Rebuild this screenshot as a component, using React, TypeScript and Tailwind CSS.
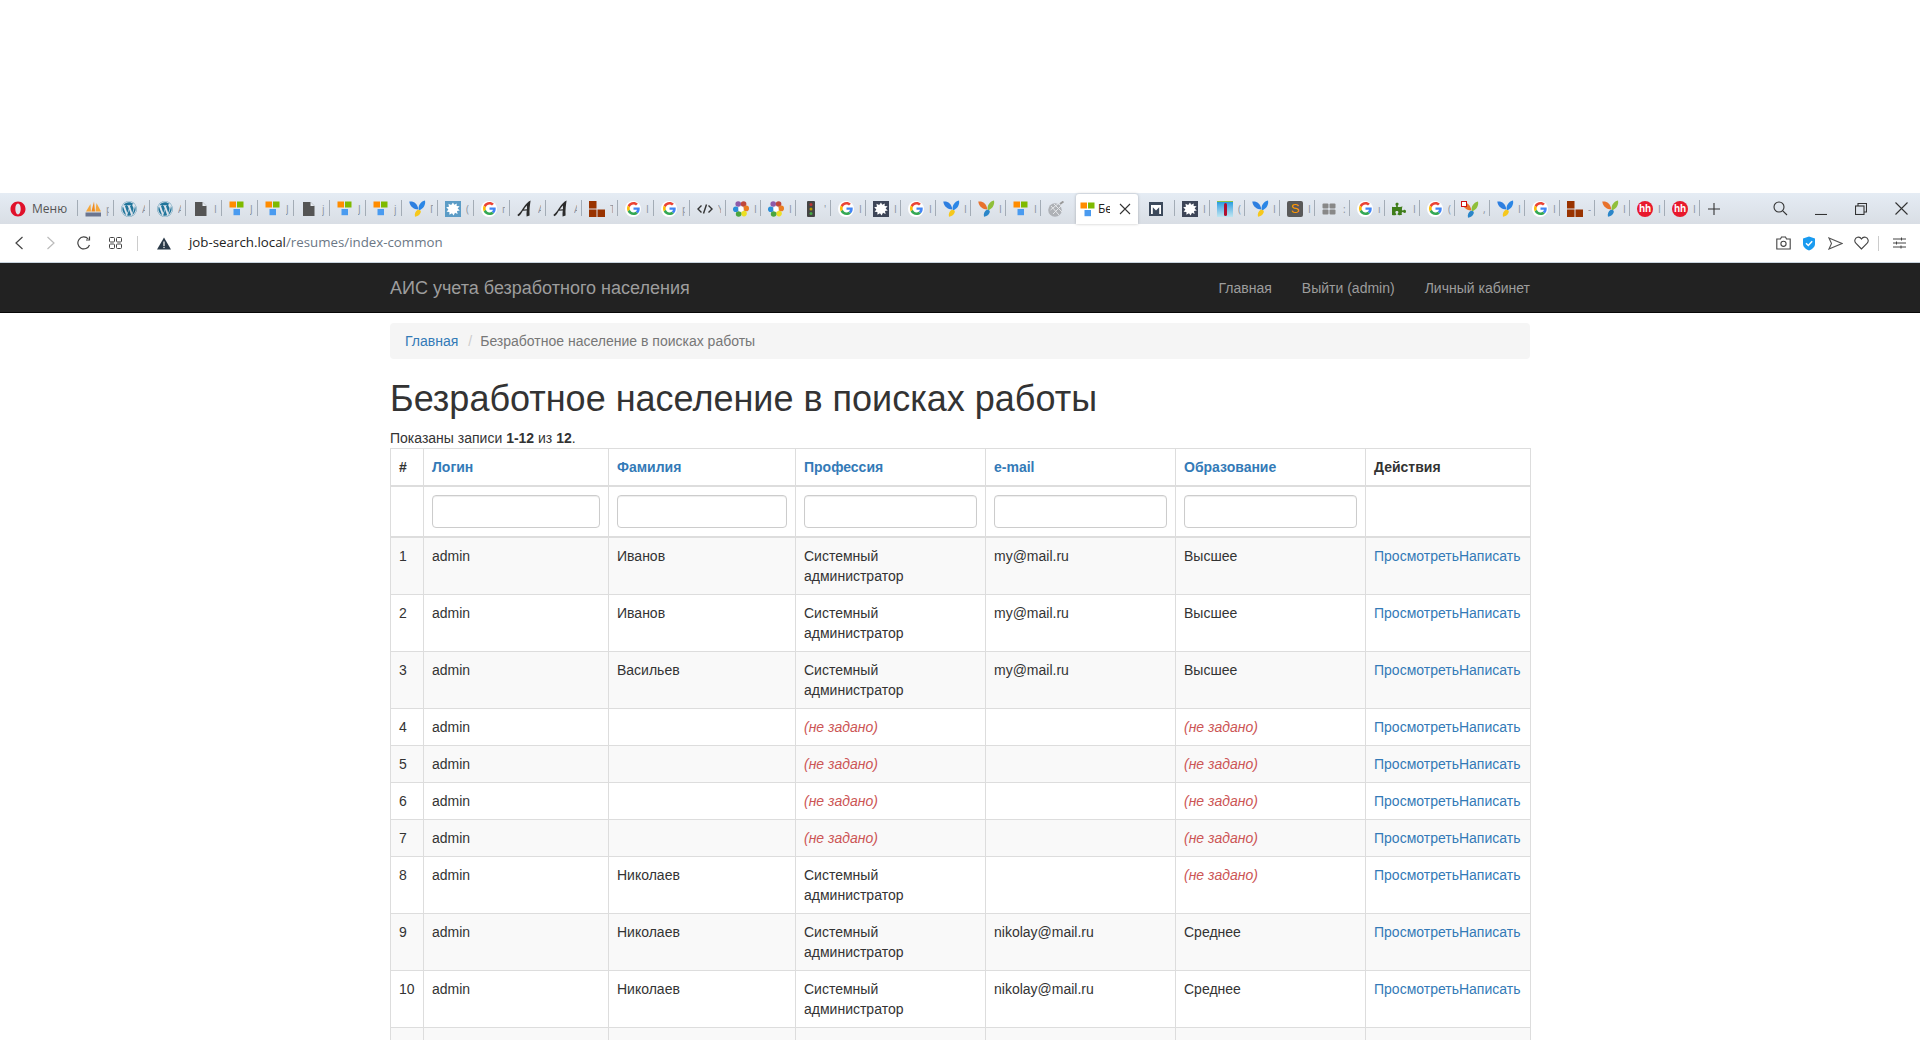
import React from "react";
import { FaWordpress, FaPuzzlePiece } from "react-icons/fa";

type IconName = "pma" | "wp" | "doc" | "ms" | "yii" | "splat" | "g" | "a" | "brick" | "code" | "flower" | "traffic" | "dark" | "yo" | "sat" | "m" | "tricky" | "s" | "grid" | "puzzle" | "yred" | "hh";

function Ms() {
  return (
    <svg width="15" height="15" viewBox="0 0 15 15" className="block">
      <rect x="0.5" y="0.5" width="6.5" height="6" fill="#ff8c00" />
      <rect x="8" y="0.5" width="6.5" height="6" fill="#7fba00" />
      <rect x="4.5" y="8" width="6.5" height="6.2" fill="#4a9bf0" />
    </svg>
  );
}

function Yii({ orange }: { orange?: boolean }) {
  return (
    <svg width="17" height="17" viewBox="0 0 17 17" className="block">
      <path d="M0.3 1.6C4.5 1 8.6 3.2 9.3 9.6C4.6 9.6 0.8 6.4 0.3 1.6Z" fill={orange ? "#e8722c" : "#2e7fe0"} />
      <path d="M16 0.4C16.9 4.4 14.4 9 9.9 10.2C8.6 6 11.4 1.4 16 0.4Z" fill={orange ? "#8fbf3a" : "#2b86e6"} />
      <path d="M8.8 9.8C11 9.6 12.4 10.6 11.6 12.8C10.8 15 8.4 16.4 6 16.8C5.2 14.2 6.4 11.2 8.8 9.8Z" fill={orange ? "#2a86c9" : "#f6c81c"} />
    </svg>
  );
}

function Splat({ dark }: { dark?: boolean }) {
  return (
    <svg width="16" height="16" viewBox="0 0 16 16" className="block">
      <rect width="16" height="16" fill={dark ? "#3d4557" : "#5b9cc6"} />
      <path d="M8 1.5L9.2 3.8L11.8 2.4L11.6 5L14.6 5.2L12.6 7.4L14.8 9.6L12 10L12.6 13L10 11.8L8.6 14.6L7 12.2L4.4 13.8L4.4 11L1.6 10.8L3.4 8.4L1.2 6.2L4 5.8L3.4 2.8L6.2 4Z" fill="#fff" />
    </svg>
  );
}

function G() {
  return (
    <div className="w-4 h-4 rounded-full bg-white flex items-center justify-center">
      <svg width="13" height="13" viewBox="0 0 48 48" className="block">
        <path fill="#EA4335" d="M24 9.5c3.54 0 6.71 1.22 9.21 3.6l6.85-6.85C35.9 2.38 30.47 0 24 0 14.62 0 6.51 5.38 2.56 13.22l7.98 6.19C12.43 13.72 17.74 9.5 24 9.5z" />
        <path fill="#4285F4" d="M46.98 24.55c0-1.57-.15-3.09-.38-4.55H24v9.02h12.94c-.58 2.96-2.26 5.48-4.78 7.18l7.73 6c4.51-4.18 7.09-10.36 7.09-17.65z" />
        <path fill="#FBBC05" d="M10.53 28.59c-.48-1.45-.76-2.99-.76-4.59s.27-3.14.76-4.59l-7.98-6.19C.92 16.46 0 20.12 0 24c0 3.88.92 7.54 2.56 10.78l7.97-6.19z" />
        <path fill="#34A853" d="M24 48c6.48 0 11.93-2.13 15.89-5.81l-7.73-6c-2.15 1.45-4.92 2.3-8.16 2.3-6.26 0-11.57-4.22-13.47-9.91l-7.98 6.19C6.51 42.62 14.62 48 24 48z" />
      </svg>
    </div>
  );
}

function Icon({ name }: { name: IconName }) {
  switch (name) {
    case "pma":
      return (
        <svg width="17" height="16" viewBox="0 0 17 16" className="block">
          <path d="M1 10.5L5.5 3L6 10.5Z" fill="#f5a63a" />
          <path d="M6.4 10.5L9 0.5L10 10.5Z" fill="#f08a1d" />
          <path d="M10.5 10.5L11.5 2L16 10.5Z" fill="#f5a63a" />
          <path d="M0.5 11.5H16V15.5H0.5Z" fill="#6a7590" />
        </svg>
      );
    case "wp":
      return <FaWordpress className="block text-[#21759b] text-[16px]" />;
    case "doc":
      return (
        <svg width="16" height="16" viewBox="0 0 16 16" className="block">
          <path d="M2 1H9.5L13.5 5V15H2Z" fill="#555" />
          <path d="M9.5 1V5H13.5Z" fill="#e8edf3" />
        </svg>
      );
    case "ms":
      return <Ms />;
    case "yii":
      return <Yii />;
    case "yo":
      return <Yii orange />;
    case "splat":
      return <Splat />;
    case "dark":
      return <Splat dark />;
    case "g":
      return <G />;
    case "a":
      return (
        <svg width="17" height="17" viewBox="0 0 17 17" className="block">
          <path d="M0.3 15C3.5 12.5 5 9.5 7.5 6C9 4 11 1.8 13.6 0.6C13 4.5 12.2 9.5 12.6 15.6L9.6 16.4C9.4 14 9.6 12 9.8 10.6L5.8 10.8C4.8 12.8 3.2 15.4 1.6 16.2Z" fill="#2b2b2b" />
          <path d="M9.9 5.6C8.8 6.8 7.6 8.2 6.8 9.4L10 9.2Z" fill="#e3e8ee" />
        </svg>
      );
    case "brick":
      return (
        <svg width="16" height="16" viewBox="0 0 16 16" className="block">
          <rect x="0" y="0" width="7.5" height="7.5" fill="#993300" />
          <rect x="0" y="8.5" width="7.5" height="7.5" fill="#993300" />
          <rect x="8.5" y="8.5" width="7.5" height="7.5" fill="#993300" />
        </svg>
      );
    case "code":
      return (
        <svg width="16" height="16" viewBox="0 0 16 16" className="block" fill="none" stroke="#333" strokeWidth="1.4">
          <path d="M4.5 4.5L1 8L4.5 11.5" />
          <path d="M11.5 4.5L15 8L11.5 11.5" />
          <path d="M9.5 3.5L6.5 12.5" />
        </svg>
      );
    case "flower":
      return (
        <svg width="16" height="16" viewBox="0 0 16 16" className="block">
          <circle cx="5.2" cy="3" r="2.8" fill="#8e5aa8" />
          <circle cx="10.6" cy="3" r="2.8" fill="#c0473b" />
          <circle cx="13.2" cy="7.4" r="2.8" fill="#ea7d22" />
          <circle cx="11" cy="12.6" r="2.8" fill="#ece024" />
          <circle cx="5.6" cy="13" r="2.8" fill="#4aa63f" />
          <circle cx="2.8" cy="8.2" r="2.8" fill="#2a8fd8" />
          <circle cx="8" cy="8" r="2.6" fill="#fff" />
        </svg>
      );
    case "traffic":
      return (
        <svg width="16" height="16" viewBox="0 0 16 16" className="block">
          <rect x="4" y="0" width="8" height="16" rx="1" fill="#444" />
          <circle cx="8" cy="3.5" r="1.5" fill="#b33" />
          <circle cx="8" cy="8" r="1.5" fill="#b90" />
          <circle cx="8" cy="12.5" r="1.5" fill="#4a4" />
        </svg>
      );
    case "sat":
      return (
        <svg width="16" height="16" viewBox="0 0 16 16" className="block">
          <circle cx="7" cy="9" r="6.8" fill="#aeb1b6" />
          <path d="M2.5 9L11 2M5 13L14 4M3 5L11 14M6 3L14 11" stroke="#e5e7ea" strokeWidth="1" />
          <path d="M12 3L15.5 0.5" stroke="#999" strokeWidth="2" />
        </svg>
      );
    case "m":
      return (
        <svg width="14" height="14" viewBox="0 0 14 14" className="block">
          <rect width="14" height="14" fill="#3d4a5c" />
          <path d="M2 3H12V12H10.2V5.2L7 8.5L3.8 5.2V12H2Z" fill="#fff" />
        </svg>
      );
    case "tricky":
      return (
        <div className="w-4 h-4 bg-gradient-to-b from-[#1f9fe0] to-[#bfe6f0] flex items-center justify-center border-t border-[#8bc34a]">
          <span className="w-[3px] h-[13px] bg-[#b01030] rounded-sm" />
        </div>
      );
    case "s":
      return (
        <div className="w-4 h-4 rounded-[2px] bg-[#595959] flex items-center justify-center text-[#ff9800] text-[13px] leading-none font-['Liberation_Sans',sans-serif]">S</div>
      );
    case "grid":
      return (
        <svg width="14" height="14" viewBox="0 0 14 14" className="block">
          <rect x="0.5" y="1.5" width="6" height="5" rx="1" fill="#888" />
          <rect x="7.5" y="1.5" width="6" height="5" rx="1" fill="#888" />
          <rect x="0.5" y="7.5" width="6" height="5" rx="1" fill="#888" />
          <rect x="7.5" y="7.5" width="6" height="5" rx="1" fill="#888" />
        </svg>
      );
    case "puzzle":
      return <FaPuzzlePiece className="block text-[#3f7d1a] text-[14px]" />;
    case "yred":
      return (
        <div className="relative w-4 h-4">
          <Yii orange />
          <span className="absolute left-[-1px] top-0 w-[6px] h-[6px] bg-white border border-[#d01010]" />
        </div>
      );
    case "hh":
      return (
        <div className="w-4 h-4 rounded-full bg-[#e8192c] flex items-center justify-center text-white text-[10px] leading-none font-bold font-['Liberation_Sans',sans-serif]">hh</div>
      );
  }
}

const TABS_A: [IconName, string][] = [
  ["pma", "p"], ["wp", "A"], ["wp", "A"], ["doc", "I"], ["ms", "J"], ["ms", "J"], ["doc", "j"], ["ms", "J"], ["ms", "j"], ["yii", "Г"], ["splat", "("],
  ["g", "г"], ["a", "A"], ["a", "A"], ["brick", "Т"], ["g", "I"], ["g", "р"], ["code", "Y"],
];
const TABS_B: [IconName, string][] = [
  ["flower", "I"], ["flower", "I"], ["traffic", "'"], ["g", "I"], ["dark", "I"], ["g", "I"], ["yii", "I"], ["yo", "I"], ["ms", "I"],
];
const TABS_C: [IconName, string][] = [
  ["dark", "I"], ["tricky", "("], ["yii", "I"], ["s", "I"], ["grid", ":"], ["g", "ı"], ["puzzle", "I"], ["g", "("], ["yred", ","], ["yii", "I"], ["g", "I"], ["brick", "-"], ["yo", "I"], ["hh", "I"], ["hh", "I"],
];

function Tab({ icon, letter, wide, sep = true }: { icon: IconName; letter: string; wide?: boolean; sep?: boolean }) {
  return (
    <div className={`relative flex items-center shrink-0 h-full ${wide ? "w-[36px]" : "w-[35px]"}`}>
      <div className="w-[28px] pl-[7px] flex items-center"><Icon name={icon} /></div>
      <span className="absolute left-[28px] top-[9px] w-[3px] overflow-hidden text-[10px] leading-[14px] text-[#8a93a0]">{letter}</span>
      {sep && <span className="absolute right-0 top-[7px] h-4 w-px bg-[#a3acb6]" />}
    </div>
  );
}

function TabBar() {
  return (
    <div className="h-[31px] flex items-stretch bg-gradient-to-b from-[#e5ecf4] to-[#d9dee5] font-['Open_Sans',sans-serif] text-[#444]">
      <div className="relative w-[78px] shrink-0 flex items-center">
        <svg width="16" height="16" viewBox="0 0 16 16" className="ml-[10px] block">
          <path fillRule="evenodd" d="M8 0.5C3.8 0.5 0.5 3.9 0.5 8C0.5 12.1 3.8 15.5 8 15.5C12.2 15.5 15.5 12.1 15.5 8C15.5 3.9 12.2 0.5 8 0.5ZM8 2.6C9.6 2.6 10.7 5 10.7 8C10.7 11 9.6 13.4 8 13.4C6.4 13.4 5.3 11 5.3 8C5.3 5 6.4 2.6 8 2.6Z" fill="#e0112b" />
        </svg>
        <span className="ml-[6px] text-[12px] leading-none text-[#555]">Меню</span>
        <span className="absolute right-0 top-[7px] h-4 w-px bg-[#a3acb6]" />
      </div>
      {TABS_A.map(([i, l], k) => <Tab key={k} icon={i} letter={l} wide />)}
      {TABS_B.map(([i, l], k) => <Tab key={k} icon={i} letter={l} />)}
      <Tab icon="sat" letter="" sep={false} />
      <div className="relative mt-px w-[62px] shrink-0 rounded-t-[3px] bg-white shadow-[0_0_3px_rgba(0,0,0,0.25)] flex items-center pl-[4px]">
        <Ms />
        <span className="ml-[3px] w-[12px] overflow-hidden text-[12px] leading-none text-[#222]">Бе</span>
        <svg width="12" height="12" viewBox="0 0 12 12" className="ml-[9px] block" stroke="#333" strokeWidth="1.1" fill="none">
          <path d="M1 1L11 11M11 1L1 11" />
        </svg>
      </div>
      <div className="relative w-[37px] shrink-0 flex items-center justify-center pr-[2px]">
        <Icon name="m" />
        <span className="absolute right-0 top-[7px] h-4 w-px bg-[#a3acb6]" />
      </div>
      {TABS_C.map(([i, l], k) => <Tab key={k} icon={i} letter={l} />)}
      <div className="flex-1 flex items-center text-[#333]">
        <svg width="14" height="14" viewBox="0 0 14 14" className="ml-[7px] block" stroke="#333" strokeWidth="1.1" fill="none"><path d="M1 7H13M7 1V13" /></svg>
        <svg width="15" height="15" viewBox="0 0 15 15" className="ml-[52px] block" stroke="#333" strokeWidth="1.1" fill="none"><circle cx="6" cy="6" r="5" /><path d="M9.8 9.8L14 14" /></svg>
        <svg width="12" height="12" viewBox="0 0 12 12" className="ml-[27px] block" stroke="#333" strokeWidth="1.1" fill="none"><path d="M0 11.5H12" /></svg>
        <svg width="12" height="12" viewBox="0 0 12 12" className="ml-[28px] block" stroke="#333" strokeWidth="1.1" fill="none"><rect x="0.5" y="3" width="8.5" height="8.5" /><path d="M3 3V0.5H11.5V9H9" /></svg>
        <svg width="13" height="13" viewBox="0 0 13 13" className="ml-[28px] block" stroke="#333" strokeWidth="1.1" fill="none"><path d="M0.5 0.5L12.5 12.5M12.5 0.5L0.5 12.5" /></svg>
      </div>
    </div>
  );
}

function AddressBar() {
  return (
    <div className="h-[39px] bg-white border-b border-[#c8d4de] flex items-center font-['Open_Sans',sans-serif]">
      <svg width="10" height="14" viewBox="0 0 10 14" className="ml-[14px] block" stroke="#444" strokeWidth="1.2" fill="none"><path d="M8.5 1L2 7L8.5 13" /></svg>
      <svg width="10" height="14" viewBox="0 0 10 14" className="ml-[22px] block" stroke="#bbb" strokeWidth="1.2" fill="none"><path d="M1.5 1L8 7L1.5 13" /></svg>
      <svg width="14" height="14" viewBox="0 0 14 14" className="ml-[21px] block" stroke="#444" strokeWidth="1.2" fill="none"><path d="M12.5 9A6 6 0 1 1 11.2 2.8" /><path d="M12.5 0.5V4H9" /></svg>
      <svg width="13" height="12" viewBox="0 0 13 12" className="ml-[18px] block" stroke="#444" strokeWidth="1" fill="none"><rect x="0.5" y="0.5" width="5" height="4.5" rx="1" /><rect x="7.5" y="0.5" width="5" height="4.5" rx="1" /><rect x="0.5" y="7" width="5" height="4.5" rx="1" /><rect x="7.5" y="7" width="5" height="4.5" rx="1" /></svg>
      <span className="ml-[15px] w-px h-[15px] bg-[#ccc]" />
      <svg width="14" height="13" viewBox="0 0 14 13" className="ml-[19px] block"><path d="M7 0.5L14 12.5H0Z" fill="#2b3a48" /><rect x="6.4" y="4.5" width="1.2" height="4.5" fill="#fff" /><rect x="6.4" y="9.8" width="1.2" height="1.3" fill="#fff" /></svg>
      <span className="ml-[18px] text-[13.3px] leading-none whitespace-nowrap text-[#222]">job-search.local<span className="text-[#6b7785]">/resumes/index-common</span></span>
      <div className="ml-auto flex items-center">
        <svg width="15" height="14" viewBox="0 0 15 14" stroke="#444" strokeWidth="1.1" fill="none" className="block"><path d="M0.8 3H4.5L5.5 1H9.5L10.5 3H14.2V13H0.8Z" /><circle cx="7.5" cy="7.8" r="2.6" /></svg>
        <svg width="14" height="15" viewBox="0 0 14 15" className="ml-[11px] block"><path d="M7 0.5L13 2.5V8C13 11 10 13.5 7 14.5C4 13.5 1 11 1 8V2.5Z" fill="#1a9bf0" /><path d="M4 7.2L6.3 9.5L10.2 5.3" stroke="#fff" strokeWidth="1.5" fill="none" /></svg>
        <svg width="15" height="13" viewBox="0 0 15 13" className="ml-[12px] block" stroke="#555" strokeWidth="1.1" fill="none"><path d="M1 1L14 6.5L1 12L3.5 6.5Z" /></svg>
        <svg width="15" height="14" viewBox="0 0 15 14" className="ml-[11px] block" stroke="#444" strokeWidth="1.1" fill="none"><path d="M7.5 13L1.8 7.2C0 5.3 0.7 2 3.5 1.2C5.2 0.8 6.7 1.6 7.5 3C8.3 1.6 9.8 0.8 11.5 1.2C14.3 2 15 5.3 13.2 7.2Z" /></svg>
        <span className="ml-[9px] w-px h-[15px] bg-[#ccc]" />
        <svg width="13" height="12" viewBox="0 0 13 12" className="ml-[14px] mr-[14px] block" stroke="#444" strokeWidth="1" fill="none"><path d="M0 2H13M0 6H13M0 10H13" /><path d="M8.5 0.5V3.5M3.5 4.5V7.5M8 8.5V11.5" /></svg>
      </div>
    </div>
  );
}

type Row = { n: number; last: string; job: boolean; email: string; edu: string };
const ROWS: Row[] = [
  { n: 1, last: "Иванов", job: true, email: "my@mail.ru", edu: "Высшее" },
  { n: 2, last: "Иванов", job: true, email: "my@mail.ru", edu: "Высшее" },
  { n: 3, last: "Васильев", job: true, email: "my@mail.ru", edu: "Высшее" },
  { n: 4, last: "", job: false, email: "", edu: "" },
  { n: 5, last: "", job: false, email: "", edu: "" },
  { n: 6, last: "", job: false, email: "", edu: "" },
  { n: 7, last: "", job: false, email: "", edu: "" },
  { n: 8, last: "Николаев", job: true, email: "", edu: "" },
  { n: 9, last: "Николаев", job: true, email: "nikolay@mail.ru", edu: "Среднее" },
  { n: 10, last: "Николаев", job: true, email: "nikolay@mail.ru", edu: "Среднее" },
  { n: 11, last: "Николаев", job: true, email: "nikolay@mail.ru", edu: "Среднее" },
];

function NotSet() {
  return <span className="italic text-[#c55]">(не задано)</span>;
}

const TH = "border border-[#ddd] border-b-2 p-2 text-left align-bottom font-bold";
const TD = "border border-[#ddd] p-2 align-top";

export default function App() {
  return (
    <div className="h-[1040px] overflow-hidden bg-white font-['Liberation_Sans',Arial,sans-serif] text-[14px] leading-[20px] text-[#333]">
      <div className="h-[193px]" />
      <TabBar />
      <AddressBar />
      <nav className="h-[50px] bg-[#222] border-b border-[#080808]">
        <div className="w-[1140px] mx-auto h-[49px] flex items-center justify-between text-[#9d9d9d]">
          <a className="text-[18px]">АИС учета безработного населения</a>
          <div className="flex gap-[30px]">
            <a>Главная</a>
            <a>Выйти (admin)</a>
            <a>Личный кабинет</a>
          </div>
        </div>
      </nav>
      <div className="w-[1140px] mx-auto pt-[10px]">
        <div className="bg-[#f5f5f5] rounded-[4px] px-[15px] py-2 flex">
          <a className="text-[#337ab7]">Главная</a>
          <span className="px-[5px] ml-[5px] mr-[2px] text-[#ccc]">/</span>
          <span className="ml-[1px] text-[#777]">Безработное население в поисках работы</span>
        </div>
        <h1 className="mt-5 mb-[9px] text-[36px] leading-[39.6px] font-medium">Безработное население в поисках работы</h1>
        <div>Показаны записи <b>1-12</b> из <b>12</b>.</div>
        <table className="w-[1140px] table-fixed border-collapse">
          <colgroup>
            <col className="w-[33px]" />
            <col className="w-[185px]" />
            <col className="w-[187px]" />
            <col className="w-[190px]" />
            <col className="w-[190px]" />
            <col className="w-[190px]" />
            <col className="w-[165px]" />
          </colgroup>
          <thead>
            <tr>
              <th className={TH}>#</th>
              <th className={`${TH} text-[#337ab7]`}>Логин</th>
              <th className={`${TH} text-[#337ab7]`}>Фамилия</th>
              <th className={`${TH} text-[#337ab7]`}>Профессия</th>
              <th className={`${TH} text-[#337ab7]`}>e-mail</th>
              <th className={`${TH} text-[#337ab7]`}>Образование</th>
              <th className={TH}>Действия</th>
            </tr>
            <tr>
              <td className="border border-[#ddd] border-b-2 p-2" />
              {[0, 1, 2, 3, 4].map((i) => (
                <td key={i} className="border border-[#ddd] border-b-2 p-2">
                  <input className="block w-full h-[33px] px-3 border border-[#ccc] rounded-[4px] bg-white shadow-[inset_0_1px_1px_rgba(0,0,0,0.075)]" />
                </td>
              ))}
              <td className="border border-[#ddd] border-b-2 p-2" />
            </tr>
          </thead>
          <tbody>
            {ROWS.map((r) => (
              <tr key={r.n} className="odd:bg-[#f9f9f9]">
                <td className={TD}>{r.n}</td>
                <td className={TD}>admin</td>
                <td className={TD}>{r.last}</td>
                <td className={TD}>{r.job ? <>Системный<br />администратор</> : <NotSet />}</td>
                <td className={TD}>{r.email}</td>
                <td className={TD}>{r.edu || <NotSet />}</td>
                <td className={`${TD} text-[#337ab7] whitespace-nowrap`}><a>Просмотреть</a><a>Написать</a></td>
              </tr>
            ))}
          </tbody>
        </table>
      </div>
    </div>
  );
}
